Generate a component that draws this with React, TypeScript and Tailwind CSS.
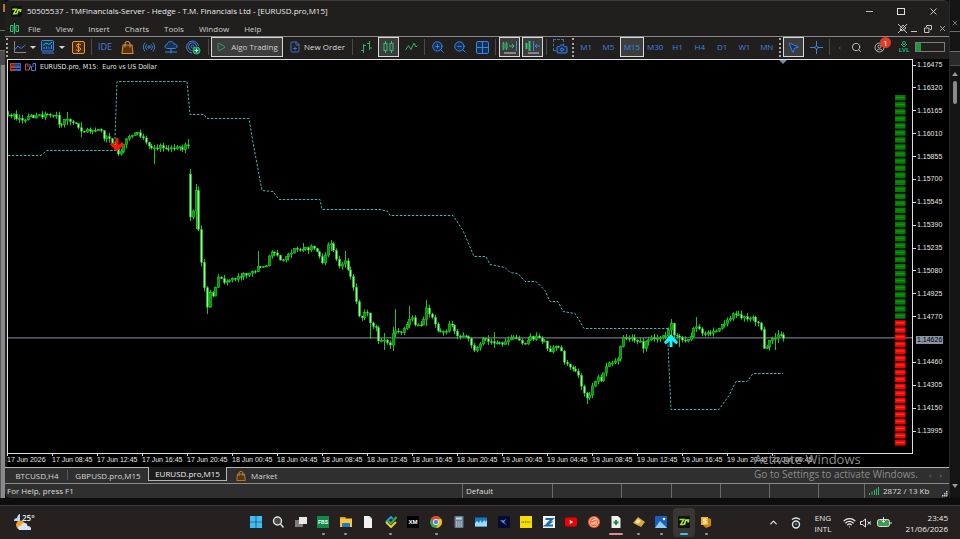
import React from "react";
import {
  Camera,
  ChevronUp,
  FilePlus,
  MousePointer2,
  Play,
  Radio,
  Search,
  Wifi,
  X,
  ZoomIn,
  ZoomOut,
} from "lucide-react";

const STEP = 2.8125;

type Point = [number, number];

// price path: x, y on the chart canvas
const MORNING: Point[] = [
  [8, 115], [13, 114], [20, 120], [25, 118], [33, 117], [50, 114], [55, 115], [59, 125],
  [63, 122], [68, 117], [72, 124], [77, 124], [80, 130], [87, 131], [93, 129], [100, 129],
  [104, 138], [108, 139], [113, 144], [117, 153], [120, 151], [125, 141], [130, 136], [133, 132],
  [137, 134], [142, 138], [147, 144], [153, 148], [163, 147], [173, 148], [182, 148], [187, 144],
];

const AFTER_GAP: Point[] = [
  [190, 217], [193, 210], [196, 189], [198, 225], [201, 258], [204, 288], [207, 306], [210, 291],
  [213, 296], [216, 283], [218, 279], [223, 281], [232, 280], [240, 277], [247, 273], [253, 272],
  [257, 268], [262, 266], [266, 267], [269, 255], [273, 251], [276, 252], [280, 261], [284, 257],
  [287, 253], [290, 256], [295, 248], [303, 249], [314, 247], [318, 255], [321, 257], [323, 267],
  [325, 256], [328, 243], [331, 244], [334, 252], [337, 264], [340, 267], [343, 260], [347, 263],
  [348, 274], [352, 278], [354, 293], [357, 307], [359, 318], [363, 317], [366, 309], [369, 320],
  [372, 327], [376, 327], [378, 340], [383, 341], [388, 344], [391, 347], [393, 328], [397, 330],
  [400, 334], [403, 328], [407, 325], [410, 317], [415, 323], [420, 323], [423, 325], [425, 303],
  [427, 313], [432, 317], [435, 327], [438, 331], [442, 329], [447, 332], [449, 325], [453, 327],
  [456, 335], [462, 337], [467, 336], [470, 343], [475, 352], [478, 345], [483, 338], [488, 342],
  [493, 344], [502, 343], [507, 341], [515, 337], [520, 341], [525, 343], [530, 337], [537, 338],
  [542, 340], [545, 343], [548, 352], [555, 346], [560, 347], [564, 363], [568, 363], [573, 370],
  [577, 371], [581, 387], [585, 395], [589, 398], [592, 388], [595, 380], [598, 375], [602, 382],
  [604, 367], [610, 363], [617, 361], [619, 350], [623, 337], [628, 337], [637, 340], [640, 342],
  [643, 347], [648, 338], [655, 337], [662, 337], [667, 333], [671, 323], [674, 336], [678, 338],
  [687, 341], [690, 337], [693, 329], [697, 327], [703, 333], [710, 334], [715, 330], [720, 328],
  [724, 323], [728, 321], [733, 315], [737, 312], [742, 317], [753, 318], [758, 323], [761, 330],
  [763, 347], [768, 347], [770, 335], [774, 345], [776, 335], [783, 337],
];

// long wicks: x, high, low
const SPIKES: [number, number, number][] = [
  [68, 112, 125], [80, 122, 137], [153, 145, 164], [187, 139, 147], [190, 169, 221],
  [196, 184, 229], [207, 286, 314], [257, 251, 272], [303, 243, 252], [331, 240, 251],
  [345, 251, 264], [371, 322, 339], [384, 333, 350], [392, 327, 351], [396, 309, 334],
  [409, 306, 319], [425, 300, 326], [452, 321, 327], [493, 332, 348], [587, 392, 404],
  [643, 340, 353], [671, 319, 340], [673, 323, 338], [679, 334, 347], [696, 317, 332],
  [737, 311, 318], [774, 333, 350], [778, 330, 343],
];

const CHANNEL = [
  "8,155 41,155 47,150 115,150 115,138 117,81 187,81 190,114 204,114 207,118 249,118 253,142 262,190 273,191 279,199 320,199 322,209 380,209 388,211 390,215 453,215 463,230 474,256 486,256 490,264 505,267 510,272 518,273 525,281 536,281 545,290 550,301 558,301 563,311 575,313 580,321 584,328 668,328",
  "668,328 668,345 671,409 719,409 729,395 736,381 747,381 753,373 783,373",
];

const PRICES = [
  "1.16475", "1.16320", "1.16165", "1.16010", "1.15855", "1.15700", "1.15545", "1.15390", "1.15235",
  "1.15080", "1.14925", "1.14770", "1.14626", "1.14460", "1.14305", "1.14150", "1.13995",
];

const TIMES = [
  "17 Jun 2026", "17 Jun 08:45", "17 Jun 12:45", "17 Jun 16:45", "17 Jun 20:45", "18 Jun 00:45",
  "18 Jun 04:45", "18 Jun 08:45", "18 Jun 12:45", "18 Jun 16:45", "18 Jun 20:45", "19 Jun 00:45",
  "19 Jun 04:45", "19 Jun 08:45", "19 Jun 12:45", "19 Jun 16:45", "19 Jun 20:45", "22 Jun 00:45",
];

const noise = (i: number) => {
  const v = Math.sin(i * 12.9898) * 43758.5453;
  return v - Math.floor(v);
};

const buildCandles = (points: Point[], first: number) => {
  const candles: { x: number; open: number; close: number; high: number; low: number }[] = [];
  const end = points[points.length - 1][0];
  let open = first;
  for (let x = points[0][0], i = 0; x <= end + 1; x += STEP, i++) {
    let k = 0;
    while (k < points.length - 2 && points[k + 1][0] < x) k++;
    const [x0, y0] = points[k];
    const [x1, y1] = points[k + 1];
    const t = Math.min(1, (x - x0) / (x1 - x0));
    const close = y0 + (y1 - y0) * t + (noise(i + first) - 0.5) * 4;
    let high = Math.min(open, close) - noise(i * 3 + 1) * 4;
    let low = Math.max(open, close) + noise(i * 7 + 2) * 4;
    const spike = SPIKES.find((s) => Math.abs(s[0] - x) < STEP / 2);
    if (spike) {
      high = Math.min(high, spike[1]);
      low = Math.max(low, spike[2]);
    }
    candles.push({ x: Math.round(x), open, close, high, low });
    open = close;
  }
  return candles;
};

const CANDLES = [...buildCandles(MORNING, 116), ...buildCandles(AFTER_GAP, 174)];

const PriceChart = () => (
  <svg
    viewBox="8 60 904 393"
    preserveAspectRatio="none"
    className="block w-full h-[393px]"
    role="img"
    aria-label="EURUSD.pro M15"
  >
    <rect x="8" y="337" width="904" height="1.6" fill="#565a66" />
    {CHANNEL.map((points) => (
      <polyline
        key={points}
        points={points}
        fill="none"
        stroke="#3fbdb0"
        strokeWidth="1"
        strokeDasharray="2.4 1.6"
        transform="translate(0 .5)"
      />
    ))}
    {CANDLES.map((c) => {
      const top = Math.min(c.open, c.close);
      const height = Math.max(1, Math.abs(c.open - c.close));
      const falling = c.close > c.open;
      return (
        <g key={c.x}>
          <rect x={c.x} y={c.high} width="1" height={c.low - c.high} fill="#22c322" />
          <rect
            x={c.x - 0.5}
            y={top}
            width="2"
            height={height}
            fill={falling ? "#8dff8d" : "#0c8f0c"}
            stroke="#14d014"
            strokeWidth={falling ? 0.4 : 0.7}
          />
        </g>
      );
    })}
    <path d="M115.5 138h3v7l4-3 1.500 2.500-7 7-7-7 1.500-2.500 4 3z" fill="#ff1400" />
    <path d="M669.500 347v-6l-4 3.500-1.500-2.500 7-8 7 8-1.500 2.500-4-3.500v6z" fill="#12f4ff" />
    <path d="M779 60h8l-4 4z" fill="#7d8b99" />
    {Array.from({ length: 50 }, (_, i) => (
      <g key={i}>
        <rect x="895" y={95 + i * 7.04} width="10.500" height="5.500" fill={i < 32 ? "#047a04" : "#fb0000"} />
        <rect x="896" y={97 + i * 7.04} width="8.500" height="1" fill={i < 32 ? "#1d961d" : "#ff4a3a"} />
      </g>
    ))}
  </svg>
);

const Separator = () => <span className="w-px h-4 mx-[2px] bg-[#4b4b4b] shrink-0" />;

const Grip = () => <span className="h-[19px] w-0 mx-px border-l-2 border-dotted border-[#a5a5a5] shrink-0" />;

const ToolButton = ({
  label,
  active,
  children,
}: {
  label: string;
  active?: boolean;
  children: React.ReactNode;
}) => (
  <button
    aria-label={label}
    className={`h-5 flex items-center justify-center shrink-0 ${
      active ? "w-[21px] mx-px bg-[#3d3d3d] border border-[#d8d8d8]" : "w-[22px]"
    }`}
  >
    {children}
  </button>
);

const Caret = () => <span className="border-x-[3px] border-t-[3px] border-x-transparent border-t-[#d5d5d5]" />;

const MarketBag = ({ size }: { size: number }) => (
  <svg width={size} height={size} viewBox="0 0 13 13" fill="none" stroke="#d58b3c" strokeWidth="1.100">
    <path d="M2 4h9l1 8.500H1z" fill="#5a3408" />
    <path d="M4 6.500V3q0-2.500 2.500-2.500T9 3v3.500" />
  </svg>
);

const Toolbar = () => (
  <div className="h-[23px] flex items-center border-t border-[#8a8a8a] pr-1 pb-[2px] text-[#3f82e0]">
    <Grip />
    <button aria-label="Chart type" className="w-7 flex items-center justify-center gap-1 ml-px">
      <svg width="13" height="13" viewBox="0 0 13 13" fill="none" strokeWidth="1">
        <path d="M1.500 0v11.500H13" stroke="#8a8a8a" />
        <path d="M2 8.500 5 5l3 2.500L12.500 4" stroke="#3f82e0" />
      </svg>
      <Caret />
    </button>
    <button aria-label="Indicators" className="w-7 flex items-center justify-center gap-1 ml-px">
      <svg width="14" height="14" viewBox="0 0 14 14" fill="none" stroke="#3f82e0">
        <rect x=".5" y=".5" width="12" height="10.500" rx="1" fill="#12325c" />
        <path d="M2 5.500 5 3l3 1.500L11 2" stroke="#35c07c" />
        <path d="M3 9V7M5.500 9V6.500M8 9V7M10.500 9V5M1 13h12" />
      </svg>
      <Caret />
    </button>
    <ToolButton label="Deposit">
      <svg width="13" height="13" viewBox="0 0 13 13" fill="none" stroke="#f0982a">
        <rect x=".5" y=".5" width="12" height="12" rx="1.500" fill="#4a2d08" />
        <path d="M9 4C8 2.800 4.300 3 4.500 4.900c.2 1.800 4.200 1.200 4.200 3.100C8.700 10 5 10 4 8.700M6.500 2v9" />
      </svg>
    </ToolButton>
    <Separator />
    <button className="w-[22px] text-[9px]">IDE</button>
    <ToolButton label="Market">
      <MarketBag size={13} />
    </ToolButton>
    <ToolButton label="Signals">
      <Radio size={14} strokeWidth={1.600} />
    </ToolButton>
    <div className="w-[46px] flex">
      <ToolButton label="Virtual hosting">
        <svg width="14" height="14" viewBox="0 0 14 14" fill="none" stroke="#3f82e0">
          <path d="M3.500 8.500C.2 8.500.2 4.800 3 4.600 3.500.8 9 .2 10 4c4 0 4 4.500.7 4.500z" fill="#12325c" />
          <path d="M7 9v2.500M1 12h4.500M8.500 12H13" />
          <circle cx="7" cy="12" r="1" />
        </svg>
      </ToolButton>
      <ToolButton label="Copy trading">
        <svg width="15" height="15" viewBox="0 0 15 15" fill="none" stroke="#3f82e0">
          <path d="M6 13A6 6 0 1 1 12.500 6M5.500 10.500A4 4 0 1 1 10.500 6" />
          <circle cx="6.500" cy="6.500" r="1.500" />
          <circle cx="10.500" cy="10.500" r="3.500" fill="#178a4c" stroke="#35c07c" />
          <path d="M10.500 8.700v3.600M8.700 10.500h3.600" stroke="#d5ffe5" />
        </svg>
      </ToolButton>
    </div>
    <Separator />
    <button className="w-[72px] h-5 flex items-center justify-center gap-[5px] bg-[#3d3d3d] border border-[#d8d8d8] text-[#cfcfcf] whitespace-nowrap">
      <Play size={10} strokeWidth={2} color="#2fb56a" />
      Algo Trading
    </button>
    <button className="w-[66px] ml-px flex items-center justify-center gap-[3px] text-[#dedede] whitespace-nowrap">
      <FilePlus size={12} strokeWidth={1.700} color="#3f82e0" />
      New Order
    </button>
    <Separator />
    <ToolButton label="Bar chart">
      <svg width="13" height="12" viewBox="0 0 13 12" fill="none" stroke="#2fb56a">
        <path d="M3.500 3v9M1 9.500h2.500M3.500 4.500H6M9.500 0v9M7 2.500h2.500M9.500 7H12" />
      </svg>
    </ToolButton>
    <ToolButton label="Candlesticks" active>
      <svg width="11" height="12" viewBox="0 0 11 12" fill="none" stroke="#2fc272">
        <path d="M2.500 0v12M8.500 0v12" />
        <rect x="1" y="2.500" width="3" height="7" fill="#3d3d3d" />
        <rect x="7" y="2.500" width="3" height="7" fill="#3d3d3d" />
      </svg>
    </ToolButton>
    <ToolButton label="Line chart">
      <svg width="13" height="10" viewBox="0 0 13 10" fill="none" stroke="#2fb56a">
        <path d="M.5 8 3.500 3.500 6 7.500 9 1l2 4 1.500-1.500" />
      </svg>
    </ToolButton>
    <Separator />
    <ToolButton label="Zoom in">
      <ZoomIn size={14} strokeWidth={1.700} fill="#12325c" />
    </ToolButton>
    <ToolButton label="Zoom out">
      <ZoomOut size={14} strokeWidth={1.700} fill="#12325c" />
    </ToolButton>
    <ToolButton label="Tile windows">
      <svg width="13" height="13" viewBox="0 0 13 13" fill="#12325c" stroke="#3f82e0">
        <rect x=".5" y=".5" width="12" height="12" rx="1.500" />
        <path d="M6.500.5v12M.5 6.500h12" />
      </svg>
    </ToolButton>
    <Separator />
    <ToolButton label="Auto scroll" active>
      <svg width="16" height="14" viewBox="0 0 16 14" fill="none" stroke="#2fc272">
        <path d="M1.500 2 1 4v4l.5 2 .5-2V4zM4.500 2 4 4v4l.5 2 .5-2V4zM7 6h5M10 4l2 2-2 2" />
        <path d="M14.500 1v10" stroke="#3f82e0" />
        <path d="M2 13h12" stroke="#cfcfcf" />
      </svg>
    </ToolButton>
    <ToolButton label="Chart shift" active>
      <svg width="16" height="14" viewBox="0 0 16 14" fill="none" stroke="#2fc272">
        <path d="M1.500 3v6M4.500 1v10" strokeWidth="2" />
        <path d="M8.500 1v10M15 6h-5M12 4l-2 2 2 2" stroke="#3f82e0" />
        <path d="M3 13h11" stroke="#cfcfcf" />
      </svg>
    </ToolButton>
    <Separator />
    <ToolButton label="Screenshot">
      <span className="relative flex">
        <span className="absolute -top-px left-0 w-[11px] h-3 border border-dashed border-[#3f6ea8]" />
        <Camera size={12} strokeWidth={2} fill="#12325c" className="relative mt-[3px] ml-[3px]" />
      </span>
    </ToolButton>
    <Grip />
    <div className="w-[203px] flex">
      {["M1", "M5", "M15", "M30", "H1", "H4", "D1", "W1", "MN"].map((frame) => (
        <button
          key={frame}
          className={`flex-1 basis-0 h-5 text-center ${
            frame === "M15" ? "bg-[#3d3d3d] border border-[#d8d8d8]" : ""
          }`}
        >
          {frame}
        </button>
      ))}
    </div>
    <Grip />
    <ToolButton label="Cursor" active>
      <MousePointer2 size={13} strokeWidth={1.800} fill="#12325c" />
    </ToolButton>
    <ToolButton label="Crosshair">
      <svg width="13" height="13" viewBox="0 0 13 13" fill="none" stroke="#3f82e0">
        <path d="M6.500 0v5M6.500 8v5M0 6.500h5M8 6.500h5" />
        <circle cx="6.500" cy="6.500" r="1.500" />
      </svg>
    </ToolButton>
    <Separator />
    <span className="flex-1 pr-1 text-right text-[#3f6ea8]">‹</span>
    <ToolButton label="Search">
      <Search size={11} strokeWidth={2} color="#c5c5c5" />
    </ToolButton>
    <button aria-label="Account" className="relative w-6 h-5 mr-[2px] flex items-center justify-center">
      <svg width="11" height="11" viewBox="0 0 11 11" fill="none" stroke="#b5b5b5">
        <circle cx="5.500" cy="5.500" r="4.500" />
        <circle cx="5.500" cy="4.500" r="1.500" />
        <path d="M2.500 9c1-2.500 5-2.500 6 0" />
      </svg>
      <span className="absolute top-0 right-0 w-[11px] h-[11px] rounded-full bg-[#e23a24] text-white leading-[11px]">
        1
      </span>
    </button>
    <span className="w-[22px] flex flex-col items-center text-[#22b573]">
      <svg width="8" height="6" viewBox="0 0 8 6" fill="none" stroke="#22b573">
        <circle cx="4" cy="2" r="1.500" />
        <path d="M1 3l3 3 3-3" />
      </svg>
      <span className="text-[6px] leading-[6px] font-bold">LVL</span>
    </span>
    <span className="w-[30px] h-[10px] flex border border-[#7a7a7a]">
      <span className="w-[5px] bg-[#1a9a3e]" />
    </span>
  </div>
);

const TerminalMark = () => (
  <>
    <rect width="12" height="12" rx="1" fill="#0b130a" />
    <path d="M1.500 3.500h4.300L2.800 8.500h3" fill="none" stroke="#a8e23a" strokeWidth="1.500" />
    <path d="M6.200 9 7.800 4.200h2.700L10 6.500" fill="none" stroke="#a8e23a" strokeWidth="1.800" />
  </>
);

const TitleBar = () => (
  <header>
    <div className="h-5 flex items-center pl-[6px]">
      <svg width="11" height="11" viewBox="0 0 12 12">
        <TerminalMark />
      </svg>
      <h1 className="flex-1 ml-[5px] text-[#ececec]">
        50505537 - TMFinancials-Server - Hedge - T.M. Financials Ltd - [EURUSD.pro,M15]
      </h1>
      <button aria-label="Minimize" className="w-8 flex justify-center">
        <span className="w-[7px] h-px bg-[#bdbdbd]" />
      </button>
      <button aria-label="Maximize" className="w-8 flex justify-center">
        <span className="w-2 h-[7px] border border-[#dedede]" />
      </button>
      <button aria-label="Close" className="w-8 flex justify-center">
        <X size={11} strokeWidth={2} color="#dedede" />
      </button>
    </div>
    <nav className="h-[15px] flex items-center pl-[5px] text-[#cfcfcf]">
      <svg width="9" height="11" viewBox="0 0 9 11" fill="none" stroke="#2fc272">
        <path d="M.5 2.500h2.500v6H.5zM4.500 0v11M6 2.500h2.500v6H6z" />
      </svg>
      <div className="flex-1 flex gap-[15px] ml-[9px]">
        {["File", "View", "Insert", "Charts", "Tools", "Window", "Help"].map((item) => (
          <button key={item}>{item}</button>
        ))}
      </div>
      <button aria-label="Unpin" className="w-[13px]">
        <svg width="9" height="9" viewBox="0 0 9 9" fill="none" stroke="#c5c5c5">
          <path d="M0 0l9 9M9 0 0 9M2 5l3-4 3 3-4 3z" />
        </svg>
      </button>
      <button aria-label="Minimize chart" className="w-[13px]">
        <span className="block mt-[6px] w-[6px] h-px bg-[#c5c5c5]" />
      </button>
      <button aria-label="Restore chart" className="w-[14px]">
        <svg width="8" height="8" viewBox="0 0 8 8" fill="none" stroke="#c5c5c5">
          <path d="M2.500 2V.5h5v4H6M.5 3h4.500v4.500H.5z" />
        </svg>
      </button>
      <button aria-label="Close chart" className="w-[11px]">
        <X size={9} strokeWidth={2} color="#c5c5c5" />
      </button>
    </nav>
  </header>
);

const ChartWindow = () => (
  <main className="relative ml-[2px] bg-black font-['Liberation_Sans',sans-serif] text-[7px] leading-[8px] text-[#e6e6e6]">
    <div className="flex">
      <div className="flex-1 min-w-0 border border-[#e0e0e0]">
        <PriceChart />
      </div>
      <ol className="w-[36px] flex flex-col justify-between pt-[2px] pb-[19px]">
        {PRICES.map((price) => (
          <li key={price} className="flex items-center gap-px">
            <span className={price === "1.14626" ? "w-[2px]" : "w-[3px] h-px bg-[#dcdcdc]"} />
            <span className={price === "1.14626" ? "px-px bg-[#8595a5] text-black" : ""}>{price}</span>
          </li>
        ))}
      </ol>
    </div>
    <ol className="h-[13px] flex overflow-hidden">
      {TIMES.map((time) => (
        <li key={time} className="w-[45px] shrink-0 whitespace-nowrap">
          <span className="block w-px h-[2px] bg-[#dcdcdc]" />
          {time}
        </li>
      ))}
    </ol>
    <div className="absolute top-1 left-[3px] flex items-center gap-1 font-['DejaVu_Sans_Condensed',sans-serif]">
      <svg width="26" height="8" viewBox="0 0 26 8">
        <path d="M0 0h5v8H0z" fill="#c23a32" />
        <path d="M5 0h6v8H5z" fill="#2c66c0" />
        <path d="M1 2h9M1 5.500h9" stroke="#16202e" />
        <path d="M15.500 1v6h4V4h1.500M15.500 1H18v3" fill="none" stroke="#d8483e" />
        <path d="M20 1v2.500h1.500v4h4V.5H23V4" fill="none" stroke="#3f82e0" />
      </svg>
      <h2 className="whitespace-pre">EURUSD.pro, M15:  Euro vs US Dollar</h2>
    </div>
  </main>
);

const ChartTabs = () => (
  <nav className="h-4 flex items-start border-t border-[#b5b5b5] bg-[#2f2f2f] text-[#d5d5d5]">
    <button className="w-[62px] pl-[2px] h-[15px]">BTCUSD,H4</button>
    <span className="w-px h-[10px] mt-[2px] bg-[#565656]" />
    <button className="w-[80px] h-[15px]">GBPUSD.pro,M15</button>
    <button className="w-[79px] h-[14px] -mt-px leading-[12px] bg-[#1d1d1d] border border-t-0 border-[#b5b5b5] text-[#ececec]">
      EURUSD.pro,M15
    </button>
    <button className="h-[15px] flex items-center gap-[5px] ml-[9px]">
      <MarketBag size={10} />
      Market
    </button>
    <span className="ml-auto mr-[7px] text-[#8a8a8a]">‹&nbsp;&nbsp;&nbsp;&nbsp;›</span>
  </nav>
);

const StatusBar = () => (
  <footer className="h-[15px] flex items-center border-t border-[#8a8a8a] bg-[#2f2f2f] rounded-b-md text-[#dedede]">
    <span className="flex-1 pl-[2px]">For Help, press F1</span>
    <span className="w-[90px] h-full border-l border-[#6a6a6a] pl-[3px] leading-[14px]">Default</span>
    <span className="w-[69px] h-full border-l border-[#6a6a6a]" />
    <span className="w-[50px] h-full border-l border-[#6a6a6a]" />
    <span className="w-[49px] h-full border-l border-[#6a6a6a]" />
    <span className="w-[49px] h-full border-l border-[#6a6a6a]" />
    <span className="w-[49px] h-full border-l border-[#6a6a6a]" />
    <span className="w-[46px] h-full border-l border-[#6a6a6a]" />
    <span className="w-[85px] h-full border-l border-[#6a6a6a] flex items-center gap-1 pl-1">
      <svg width="10" height="8" viewBox="0 0 10 8" stroke="#2fb56a">
        <path d="M.5 8V6M3 8V4.500M5.500 8V3M7.500 8V1.500M9.500 8V0" />
      </svg>
      2872 / 13 Kb
      <svg width="6" height="6" viewBox="0 0 6 6" fill="#c5c5c5" className="ml-auto mr-px self-end mb-px">
        <path d="M4 0h1.500v1.500H4zM4 2h1.500v1.500H4zM4 4h1.500v1.500H4zM2 2h1.500v1.500H2zM2 4h1.500v1.500H2zM0 4h1.500v1.500H0z" />
      </svg>
    </span>
  </footer>
);

const APPS: { name: string; mark?: "dot" | "open" | "active"; icon: React.ReactNode }[] = [
  {
    name: "Start",
    icon: <path d="M0 0h5.700v5.700H0zM6.300 0H12v5.700H6.300zM0 6.300h5.700V12H0zM6.300 6.300H12V12H6.300z" fill="#3fbdf5" />,
  },
  {
    name: "Search",
    icon: (
      <g fill="#4a4a4a" stroke="#dedede" strokeWidth="1.400">
        <circle cx="5.500" cy="5" r="4" />
        <path d="M8.500 8l3 3.500" />
      </g>
    ),
  },
  {
    name: "Task view",
    icon: (
      <>
        <path d="M0 4h8v7H0z" fill="#7d7d7d" />
        <path d="M4 1h8v7H4z" fill="#e8e8e8" />
      </>
    ),
  },
  {
    name: "FBS",
    mark: "dot",
    icon: (
      <>
        <rect width="12" height="12" fill="#118a48" />
        <text x="6" y="8" fontSize="5" fontWeight="700" textAnchor="middle" fill="#fff">FBS</text>
      </>
    ),
  },
  {
    name: "File Explorer",
    mark: "dot",
    icon: (
      <>
        <path d="M0 1h5l1 1.500h6V11H0z" fill="#f8c53c" />
        <path d="M0 1h5l1 1.500H0z" fill="#dd9a1e" />
        <path d="M2 11V8q0-1 1-1h6q1 0 1 1v3z" fill="#1f78c8" />
      </>
    ),
  },
  {
    name: "Document",
    icon: (
      <>
        <path d="M2 0h5.500L10 2.500V12H2z" fill="#f2f2f2" />
        <path d="M7.500 0 10 2.500H7.500z" fill="#b8b8b8" />
      </>
    ),
  },
  {
    name: "Trade",
    mark: "dot",
    icon: (
      <g fill="none" strokeWidth="2">
        <path d="M1 6l5-5 2 2" stroke="#1f9be0" />
        <path d="M1 6l5 5 5-5" stroke="#f2cc2a" />
        <path d="M3.500 5 6 7.500 11.500 1" stroke="#2cb04a" />
      </g>
    ),
  },
  {
    name: "XM",
    icon: (
      <>
        <rect width="12" height="12" rx="1" fill="#000" />
        <text x="6" y="8" fontSize="6" fontWeight="700" textAnchor="middle" fill="#fff">XM</text>
      </>
    ),
  },
  {
    name: "Chrome",
    mark: "dot",
    icon: (
      <>
        <circle cx="6" cy="6" r="6" fill="#34a853" />
        <path d="M.8 3A6 6 0 0 1 11.200 3L6 3.500 3.500 7z" fill="#ea4335" />
        <path d="M11.200 3A6 6 0 0 1 6 12l2.500-4.500L8 3.300z" fill="#fbbc05" />
        <circle cx="6" cy="6" r="2.900" fill="#fff" />
        <circle cx="6" cy="6" r="2.200" fill="#4285f4" />
      </>
    ),
  },
  {
    name: "Calculator",
    icon: (
      <>
        <rect x="1.500" width="9" height="12" rx="1" fill="#6b7f8f" />
        <path d="M3 1.500h6v2H3z" fill="#b5dcf0" />
        <path d="M3 6h6M3 8h6M3 10h6" stroke="#dce6ee" strokeDasharray="1.300 1" />
      </>
    ),
  },
  {
    name: "Monitor",
    icon: (
      <>
        <rect y="1.500" width="12" height="9" fill="#1878c8" />
        <path d="M0 10.500V7l2-2 2 2 1.500-3L7 7l2-3 1.500 2L12 4v6.500z" fill="#9adcfa" />
      </>
    ),
  },
  {
    name: "Kinetic",
    icon: (
      <>
        <rect width="12" height="12" rx="1" fill="#070c2e" />
        <path d="M2 4l3 .5L8.500 3 6 6l3 3-4-2z" fill="#4f8df0" />
      </>
    ),
  },
  {
    name: "Exness",
    icon: (
      <>
        <rect width="12" height="12" fill="#f7dc00" />
        <path d="M1.500 6h9" stroke="#5c5200" strokeDasharray="1.200 .5" />
      </>
    ),
  },
  {
    name: "Zoomex",
    icon: (
      <>
        <rect width="12" height="12" fill="#f0f6fa" />
        <path d="M2.500 3h7L5.500 6.500h2L2.500 9.500H10" fill="none" stroke="#1a66a8" strokeWidth="1.800" />
      </>
    ),
  },
  {
    name: "YouTube",
    icon: (
      <>
        <rect y="1.500" width="12" height="9" rx="2" fill="#f40000" />
        <path d="M4.800 4v4L8.200 6z" fill="#fff" />
      </>
    ),
  },
  {
    name: "Analytics",
    icon: (
      <>
        <circle cx="6" cy="6" r="6" fill="#ee6030" />
        <circle cx="6" cy="6" r="4.500" fill="none" stroke="#ffd9c8" strokeWidth=".7" />
        <path d="M4 8.500V6.500M6 8.500V5.500M8 8.500V4.500M3.500 5 6 3.500 8.500 3" stroke="#fff" fill="none" />
      </>
    ),
  },
  {
    name: "Spreadsheet",
    mark: "open",
    icon: (
      <>
        <path d="M1.500 0H8l2.500 2.500V12h-9z" fill="#f0f2ee" />
        <path d="M6 4v5M3.500 6.500h5" stroke="#178a3e" strokeWidth="1.800" />
      </>
    ),
  },
  {
    name: "Editor",
    mark: "dot",
    icon: (
      <>
        <path d="M0 7l5-6 7 5-4 5z" fill="#d8a63c" />
        <path d="M2 6l3-3 3 2-3 3z" fill="#fae9a8" />
      </>
    ),
  },
  {
    name: "Photos",
    mark: "dot",
    icon: (
      <>
        <rect width="12" height="12" rx="1" fill="#1b5fc0" />
        <path d="M0 12l5-7 7 7z" fill="#8fd0fa" />
        <circle cx="9" cy="3" r="1.300" fill="#e8f4ff" />
      </>
    ),
  },
  {
    name: "Terminal",
    mark: "active",
    icon: <TerminalMark />,
  },
  {
    name: "Guide",
    mark: "dot",
    icon: (
      <>
        <path d="M1 1h7v8H1z" fill="#f2b01e" />
        <path d="M8 2l3 1v7l-5 2-3-3h5z" fill="#c98412" />
        <path d="M6.500 3H3.500v2h2.500v2H3" stroke="#fff" fill="none" />
      </>
    ),
  },
];

const MARKS = {
  dot: "w-[3px] bg-[#9a9a9a]",
  open: "w-[14px] bg-[#e08a94]",
  active: "w-2 bg-[#4cb8f0]",
};

const Taskbar = () => (
  <div className="h-[34px] flex items-center border-t border-[#3a3a3a] bg-[#242120] text-[#ececec]">
    <div className="flex-1 basis-0 pl-[14px] flex items-start">
      <svg width="18" height="17" viewBox="0 0 18 17">
        <path d="M0 7q0-3 3-3 1-4 3-4v7z" fill="#bcd8f8" />
        <circle cx="6.500" cy="11" r="4.500" fill="#f5a02a" />
        <path d="M5 16q-2.500-4 2-4.500Q8.500 7.500 12.500 9.500q1 1 1 2.500 4 0 3.500 4z" fill="#d5e2f8" />
      </svg>
      <span className="-ml-[10px] leading-[8px] font-semibold">25°</span>
    </div>
    <div className="w-[473px] h-full flex items-center">
      {APPS.map((app) => (
        <button
          key={app.name}
          aria-label={app.name}
          className={`flex-1 basis-0 h-[29px] flex flex-col items-center pt-2 rounded ${
            app.mark === "active" ? "bg-[#393634]" : ""
          }`}
        >
          <svg width="12" height="12" viewBox="0 0 12 12" fill="none" fontFamily="Liberation Sans, sans-serif">
            {app.icon}
          </svg>
          {app.mark && <span className={`mt-[5px] h-[2px] shrink-0 rounded-full ${MARKS[app.mark]}`} />}
        </button>
      ))}
    </div>
    <div className="flex-1 basis-0 flex items-center justify-end pr-3">
      <button aria-label="Hidden icons" className="mr-3">
        <ChevronUp size={11} strokeWidth={2.500} />
      </button>
      <svg width="10" height="12" viewBox="0 0 10 12" fill="none" stroke="#dce8f0" strokeWidth="1.400" className="mr-2">
        <circle cx="5" cy="7.500" r="3.500" />
        <path d="M5 7h.1" strokeLinecap="round" />
        <path d="M1 2.500q4-3 8 0" />
      </svg>
      <div className="w-7 text-center leading-[11px]">
        ENG
        <br />
        INTL
      </div>
      <Wifi size={13} strokeWidth={2.200} className="ml-[6px]" />
      <svg width="12" height="10" viewBox="0 0 12 10" fill="none" stroke="#ececec" className="ml-1">
        <path d="M.5 3.500h2l3-2.500v8l-3-2.500h-2zM7.500 3.500l3.500 3M11 3.500l-3.500 3" />
      </svg>
      <svg width="15" height="11" viewBox="0 0 15 11" fill="none" stroke="#dedede" className="ml-[5px]">
        <rect x=".5" y="2.500" width="12" height="7" rx="2" fill="#3c9a4c" />
        <path d="M14 5v2M6.500 0v5M4.500 3.500l2 2 2-2" />
      </svg>
      <time className="w-[56px] text-right leading-[11px]">
        23:45
        <br />
        21/06/2026
      </time>
    </div>
  </div>
);

export default function App() {
  return (
    <div className="min-h-screen flex flex-col bg-[#0d0d0d] font-['Open_Sans','Noto_Sans',sans-serif] text-[8px] leading-[14px]">
      <div className="flex">
        <div className="w-[5px] flex flex-col bg-[#1c1c1c]">
          <span className="mt-1 h-2 w-[2px] self-end bg-[#b87a1c]" />
          <span className="mt-[18px] h-[21px] border-y border-[#6a6a6a]" />
          <span className="h-[14px] bg-[#4a4a4a]" />
          <span className="flex-1 bg-[#8a8a8a] border-l border-[#555]" />
        </div>
        <div className="relative flex-1 min-w-0 bg-[#201f1e] rounded-md border-t border-[#3a3a3a]">
          <TitleBar />
          <Toolbar />
          <ChartWindow />
          <ChartTabs />
          <StatusBar />
          <div className="absolute right-[28px] bottom-[16px] w-[167px] text-[#8d8d8d] whitespace-nowrap pointer-events-none">
            <p className="text-[13px] leading-[15px]">Activate Windows</p>
            <p className="text-[10px] leading-[15px]">Go to Settings to activate Windows.</p>
          </div>
        </div>
        <div className="w-[11px] flex flex-col items-center bg-[#141414] border-l border-[#2a2a2a] text-[#9a9a9a]">
          <X size={8} strokeWidth={2} className="mt-[19px]" />
          <span className="mt-1 w-full h-[21px] border-y border-[#6a6a6a]" />
          <span className="w-full h-[14px] bg-[#2a2a2a] border-b border-[#4a4a4a]" />
          <span className="mt-[6px] border-x-[3px] border-b-[4px] border-x-transparent border-b-[#9a9a9a]" />
          <span className="mt-[5px] w-1 h-[23px] rounded-full bg-[#8a8a8a]" />
          <span className="mt-auto mb-[10px] border-x-[3px] border-t-[4px] border-x-transparent border-t-[#9a9a9a]" />
        </div>
      </div>
      <div className="mt-auto">
        <Taskbar />
      </div>
    </div>
  );
}
